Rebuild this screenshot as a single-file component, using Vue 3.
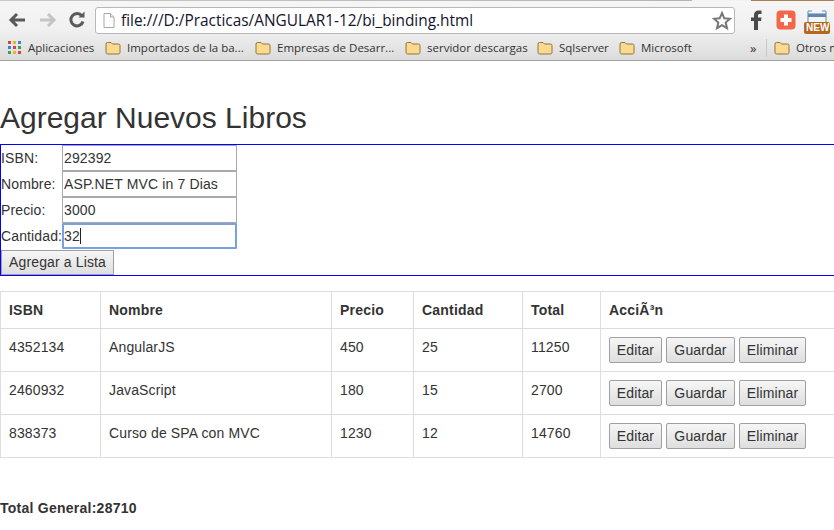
<script setup>
const bookmarks = [
  { name: "Importados de la ba...", width: 150 },
  { name: "Empresas de Desarr...", width: 150 },
  { name: "servidor descargas", width: 132 },
  { name: "Sqlserver", width: 82 },
  { name: "Microsoft", width: 131 },
];

const libros = [
  { isbn: "4352134", nombre: "AngularJS", precio: 450, cantidad: 25, total: 11250 },
  { isbn: "2460932", nombre: "JavaScript", precio: 180, cantidad: 15, total: 2700 },
  { isbn: "838373", nombre: "Curso de SPA con MVC", precio: 1230, cantidad: 12, total: 14760 },
];

const appsColors = ["#d9443a", "#e8b32e", "#3f7fe0", "#3f7fe0", "#d9443a", "#3fa34d", "#3fa34d", "#e8b32e", "#d9443a"];
</script>

<template>
  <div class="browser">
    <div class="tabstrip"></div>
    <div class="toolbar">
      <svg class="nav" width="20" height="18" viewBox="0 0 20 18">
        <path d="M9 3 L3 9 L9 15 M3.5 9 H17" fill="none" stroke="#5a5a5a" stroke-width="3" />
      </svg>
      <svg class="nav" width="20" height="18" viewBox="0 0 20 18">
        <path d="M11 3 L17 9 L11 15 M16.5 9 H3" fill="none" stroke="#c4c4c4" stroke-width="3" />
      </svg>
      <svg class="nav reload" width="18" height="18" viewBox="0 0 18 18">
        <path d="M14 5 A6.2 6.2 0 1 0 15 10.5" fill="none" stroke="#5a5a5a" stroke-width="3" />
        <path d="M10.5 6.5 H16.5 V0.5 Z" fill="#5a5a5a" />
      </svg>
      <div class="url">
        <svg width="12" height="15" viewBox="0 0 12 15">
          <path d="M1 .5 H7.5 L11 4 V14.5 H1 Z" fill="#fff" stroke="#a8a8a8" />
          <path d="M7.5 .5 V4 H11" fill="#e8e8e8" stroke="#a8a8a8" />
        </svg>
        <span class="url-text">file:///D:/Practicas/ANGULAR1-12/bi_binding.html</span>
        <svg class="star" width="20" height="19" viewBox="0 0 20 19">
          <path d="M10 2 L12.3 7.3 L18 7.8 L13.7 11.6 L15 17.2 L10 14.2 L5 17.2 L6.3 11.6 L2 7.8 L7.7 7.3 Z" fill="#fff" stroke="#777" stroke-width="2" />
        </svg>
      </div>
      <div class="extensions">
        <svg width="14" height="20" viewBox="0 0 14 20">
          <path d="M4 20 V11 H1 V7.5 H4 V5 C4 2 6 .5 8.5 .5 H11.5 V4 H9.5 C8.5 4 8 4.5 8 5.5 V7.5 H11.5 L11 11 H8 V20 Z" fill="#4a4a4a" />
        </svg>
        <svg width="20" height="20" viewBox="0 0 20 20">
          <rect width="19" height="19" x=".5" y=".5" rx="4" fill="#f2664a" />
          <path d="M8 4.5 H12 V8 H15.5 V12 H12 V15.5 H8 V12 H4.5 V8 H8 Z" fill="#fff" />
        </svg>
        <div class="new-icon">
          <svg width="28" height="25" viewBox="0 0 28 25">
            <path d="M5 2 H9 M19 2 H23 M5 2 V5 M23 2 V5" stroke="#5a92c8" stroke-width="1" fill="none" />
            <rect x="5" y="5" width="18" height="9" fill="#f4f6f8" stroke="#6c7f95" />
            <rect x="5" y="5" width="18" height="3" fill="#5f86b3" />
            <rect x="1" y="13" width="26" height="12" rx="2" fill="#b4671f" />
          </svg>
          <span class="new-label">NEW</span>
        </div>
      </div>
    </div>
    <div class="bookmarks">
      <div class="apps">
        <i v-for="(color, i) in appsColors" :key="i" :style="{ background: color }"></i>
      </div>
      <span class="apps-label">Aplicaciones</span>
      <div v-for="b in bookmarks" :key="b.name" class="mark" :style="{ width: b.width + 'px' }">
        <svg width="16" height="14" viewBox="0 0 16 14">
          <path d="M1 3 Q1 1.5 2.5 1.5 H6 L7.5 3 H13.5 Q15 3 15 4.5 V11.5 Q15 13 13.5 13 H2.5 Q1 13 1 11.5 Z" fill="#fbd98f" stroke="#8f7440" />
        </svg>
        <span>{{ b.name }}</span>
      </div>
      <span class="more">»</span>
      <div class="sep"></div>
      <div class="mark other">
        <svg width="16" height="14" viewBox="0 0 16 14">
          <path d="M1 3 Q1 1.5 2.5 1.5 H6 L7.5 3 H13.5 Q15 3 15 4.5 V11.5 Q15 13 13.5 13 H2.5 Q1 13 1 11.5 Z" fill="#fbd98f" stroke="#8f7440" />
        </svg>
        <span>Otros marcadores</span>
      </div>
    </div>
  </div>

  <main class="page">
    <h1>Agregar Nuevos Libros</h1>
    <form class="book-form" @submit.prevent>
      <label>ISBN:</label><input value="292392" />
      <label>Nombre:</label><input value="ASP.NET MVC in 7 Dias" />
      <label>Precio:</label><input value="3000" />
      <label>Cantidad:</label>
      <div class="focused">32<span class="caret"></span></div>
      <button class="add">Agregar a Lista</button>
    </form>

    <table class="books">
      <colgroup>
        <col style="width: 100px" />
        <col style="width: 231px" />
        <col style="width: 82px" />
        <col style="width: 109px" />
        <col style="width: 78px" />
        <col style="width: 260px" />
      </colgroup>
      <thead>
        <tr>
          <th>ISBN</th>
          <th>Nombre</th>
          <th>Precio</th>
          <th>Cantidad</th>
          <th>Total</th>
          <th>AcciÃ³n</th>
        </tr>
      </thead>
      <tbody>
        <tr v-for="l in libros" :key="l.isbn">
          <td>{{ l.isbn }}</td>
          <td>{{ l.nombre }}</td>
          <td>{{ l.precio }}</td>
          <td>{{ l.cantidad }}</td>
          <td>{{ l.total }}</td>
          <td class="actions">
            <button>Editar</button>
            <button>Guardar</button>
            <button>Eliminar</button>
          </td>
        </tr>
      </tbody>
    </table>

    <p class="grand-total">Total General:28710</p>
  </main>
</template>

<style>
html, body {
  margin: 0;
  background: #fff;
  overflow: hidden;
}
</style>

<style scoped>
.browser {
  height: 61px;
  box-sizing: border-box;
  border-bottom: 1px solid #a0a0a0;
  background: linear-gradient(#f6f6f6, #f0f0f0 50%, #dcdcdc);
  font-family: "Open Sans", "Noto Sans", sans-serif;
  overflow: hidden;
}

.tabstrip {
  height: 1px;
  background: linear-gradient(90deg, #c8c8c8, #b4b4b4 83%, #f2f2f2 83%, #f2f2f2 90%, #a8824e 90%);
}

.toolbar {
  height: 34px;
  box-sizing: border-box;
  padding: 4px 0 0 8px;
  display: flex;
  align-items: center;
}

.toolbar > * {
  flex: none;
}

.nav {
  margin-right: 9px;
}

.reload {
  margin-left: 2px;
  margin-right: 9px;
}

.url {
  width: 640px;
  height: 27px;
  box-sizing: border-box;
  padding: 0 0 0 7px;
  background: #fff;
  border: 1px solid #b8b8b8;
  border-radius: 3px;
  display: flex;
  align-items: center;
  gap: 6px;
}

.url-text {
  flex: 1;
  font-size: 15.4px;
  color: #14142e;
  white-space: nowrap;
}

.star {
  margin-right: 2px;
}

.extensions {
  margin-left: 15px;
  display: flex;
  align-items: center;
  gap: 12px;
}

.new-icon {
  position: relative;
  width: 28px;
  height: 25px;
  margin-left: -5px;
  margin-top: 3px;
}

.new-label {
  position: absolute;
  left: 3px;
  top: 13px;
  font: bold 10px/12px "Liberation Sans", sans-serif;
  color: #fff;
}

.bookmarks {
  height: 25px;
  padding-left: 8px;
  display: flex;
  align-items: center;
  font-size: 11.5px;
  color: #333;
  white-space: nowrap;
}

.bookmarks > * {
  flex: none;
}

.apps {
  width: 13px;
  height: 13px;
  display: grid;
  grid-template-columns: repeat(3, 3px);
  grid-auto-rows: 3px;
  gap: 2px;
  margin-right: 7px;
}

.apps-label {
  width: 77px;
}

.mark {
  display: flex;
  align-items: center;
  gap: 6px;
}

.more {
  width: 16px;
  font-size: 13px;
}

.sep {
  width: 1px;
  height: 18px;
  margin-right: 7px;
  background: #c8c8c8;
}

.page {
  font-family: "Liberation Sans", Arial, sans-serif;
  font-size: 14px;
  line-height: 20px;
  letter-spacing: .13px;
  color: #333;
}

h1 {
  margin: 0;
  padding-top: 40px;
  font-size: 30px;
  font-weight: 400;
  line-height: 33px;
  height: 43px;
  letter-spacing: 0;
}

.book-form {
  box-sizing: border-box;
  height: 132px;
  border: 1px solid #00f;
  border-right: 0;
  display: grid;
  grid-template-columns: 61px 175px;
  grid-auto-rows: 26px;
  align-items: center;
  justify-content: start;
}

.book-form label {
  white-space: nowrap;
}

.book-form input,
.focused {
  box-sizing: border-box;
  width: 175px;
  height: 26px;
  margin: 0;
  padding: 0 1px;
  border: 1px solid #a9a9a9;
  font: 14px "Liberation Sans", Arial, sans-serif;
  letter-spacing: .13px;
  color: #333;
  outline: 0;
  display: flex;
  align-items: center;
}

.focused {
  border: 2px solid #7b9fe0;
  border-radius: 1px;
  padding: 0;
}

.caret {
  width: 1px;
  height: 16px;
  background: #222;
}

button {
  box-sizing: border-box;
  font: 14px "Liberation Sans", Arial, sans-serif;
  letter-spacing: .13px;
  color: #333;
  background: linear-gradient(#f6f6f6, #dedede);
  border: 1px solid #a0a0a0;
  border-radius: 2px;
  padding: 0;
}

.add {
  grid-column: 1 / 3;
  width: 113px;
  height: 25px;
  border-radius: 0;
}

.books {
  margin-top: 15px;
  width: 860px;
  table-layout: fixed;
  border-collapse: collapse;
}

.books th,
.books td {
  border: 1px solid #ddd;
  padding: 8px;
  text-align: left;
  vertical-align: top;
}

.books th {
  height: 20px;
  font-weight: 700;
  letter-spacing: .2px;
}

.books td {
  height: 26px;
}

.actions {
  white-space: nowrap;
}

.actions button {
  height: 26px;
  margin: 0 4px 0 0;
  vertical-align: top;
}

.actions button:nth-child(1) { width: 53px; }
.actions button:nth-child(2) { width: 69px; }
.actions button:nth-child(3) { width: 67px; }

.grand-total {
  margin: 40px 0 0;
  font-weight: 700;
  letter-spacing: .25px;
}
</style>
